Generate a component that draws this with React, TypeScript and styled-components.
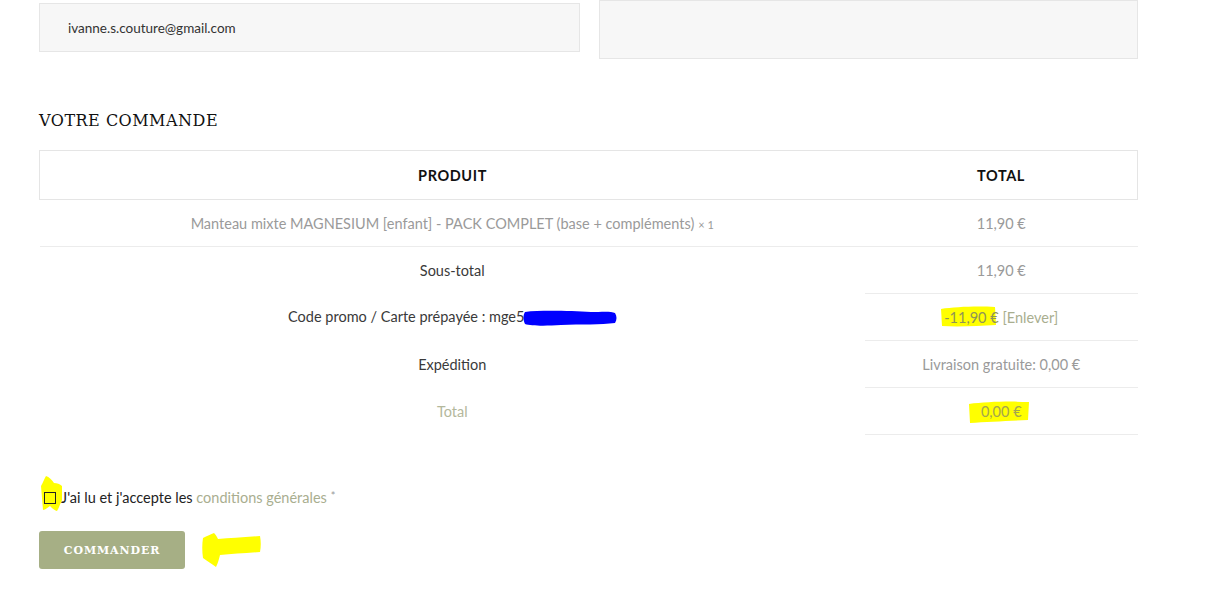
import React from "react";
import styled, { createGlobalStyle } from "styled-components";

const Global = createGlobalStyle`
  html, body { margin: 0; padding: 0; background: #fff; }
  body { font-family: "Lato", "Open Sans", sans-serif; color: #333; }
`;

const Page = styled.div`
  position: relative;
  width: 1209px;
  height: 594px;
  overflow: hidden;
  padding-left: 39px;
  box-sizing: border-box;
`;

const Wrap = styled.div`
  width: 1099px;
`;

const FieldRow = styled.div`
  display: flex;
  gap: 19px;
  align-items: flex-start;
`;

const Field = styled.div<{ $w: number; $h: number; $top: number }>`
  width: ${(p) => p.$w}px;
  height: ${(p) => p.$h}px;
  margin-top: ${(p) => p.$top}px;
  box-sizing: border-box;
  background: #f7f7f7;
  border: 1px solid #e6e6e6;
  display: flex;
  align-items: center;
  padding-left: 28px;
  font-size: 13.5px;
  color: #333;
`;

const Heading = styled.h3`
  margin: 52px 0 0;
  font-family: "DejaVu Serif", "Liberation Serif", serif;
  font-weight: 400;
  font-size: 16px;
  letter-spacing: 0.5px;
  color: #111;
  line-height: 20px;
`;

const Table = styled.table`
  margin-top: 19px;
  width: 1099px;
  border-collapse: collapse;
  table-layout: fixed;
  font-size: 14.5px;
`;

const HeadCell = styled.th<{ $w?: number }>`
  height: 48px;
  padding: 0;
  border-top: 1px solid #e5e5e5;
  border-bottom: 1px solid #e5e5e5;
  &:first-child { border-left: 1px solid #e5e5e5; }
  &:last-child { border-right: 1px solid #e5e5e5; }
  ${(p) => (p.$w ? `width: ${p.$w}px;` : "")}
  font-weight: 700;
  font-size: 14.5px;
  letter-spacing: 0.6px;
  color: #111;
  text-align: center;
`;

const BodyCell = styled.td<{ $muted?: boolean }>`
  height: 46px;
  padding: 0;
  text-align: center;
  color: ${(p) => (p.$muted ? "#9a9a9a" : "#333")};
  border-bottom: 1px solid #ececec;
`;

const Qty = styled.span`
  font-size: 11px;
  margin-left: 4px;
`;

const FootLabel = styled.th<{ $tone?: "olive" }>`
  height: 46px;
  padding: 0;
  font-weight: 400;
  text-align: center;
  color: ${(p) => (p.$tone === "olive" ? "#b4b89c" : "#3a3a3a")};
`;

const FootValue = styled.td<{ $tone?: "olive"; $noTop?: boolean }>`
  height: 46px;
  padding: 0;
  text-align: center;
  color: ${(p) => (p.$tone === "olive" ? "#a7ad84" : "#9a9a9a")};
  border-top: ${(p) => (p.$noTop ? "none" : "1px solid #ececec")};
  border-bottom: 1px solid #ececec;
`;

const Mark = styled.span`
  position: relative;
  display: inline-block;
`;

const Redacted = styled.span`
  position: relative;
  display: inline-block;
  width: 92px;
  height: 14px;
  vertical-align: middle;
`;

const Highlight = styled.svg`
  position: absolute;
  pointer-events: none;
  z-index: 0;
`;

const OnTop = styled.span<{ $color: string }>`
  position: relative;
  z-index: 1;
  color: ${(p) => p.$color};
`;

const Olive = styled.span`
  color: #a9ae8f;
`;

const Terms = styled.label`
  margin-top: 54px;
  display: flex;
  align-items: center;
  gap: 5px;
  padding-left: 5px;
  font-size: 14.5px;
  color: #222;
  position: relative;
`;

const Box = styled.span`
  position: relative;
  z-index: 1;
  width: 10px;
  height: 10px;
  border: 1.5px solid #222;
  background: transparent;
  display: inline-block;
`;

const Star = styled.span`
  color: #999;
  font-size: 11px;
  vertical-align: top;
  margin-left: 4px;
`;

const Actions = styled.div`
  margin-top: 25px;
  display: flex;
  align-items: center;
  position: relative;
`;

const Button = styled.button`
  width: 146px;
  height: 38px;
  border: none;
  border-radius: 3px;
  background: #a6af85;
  color: #fff;
  font-family: "DejaVu Serif", "Liberation Serif", serif;
  font-weight: 700;
  font-size: 11px;
  letter-spacing: 0.9px;
  cursor: pointer;
`;

const Overlay = styled.svg`
  position: absolute;
  pointer-events: none;
`;

export default function App() {
  return (
    <>
      <Global />
      <Page>
        <Wrap>
          <FieldRow>
            <Field $w={541} $h={49} $top={3}>ivanne.s.couture@gmail.com</Field>
            <Field $w={539} $h={59} $top={0} />
          </FieldRow>

          <Heading>VOTRE COMMANDE</Heading>

          <Table>
            <thead>
              <tr>
                <HeadCell $w={825}>PRODUIT</HeadCell>
                <HeadCell>TOTAL</HeadCell>
              </tr>
            </thead>
            <tbody>
              <tr>
                <BodyCell $muted>
                  Manteau mixte MAGNESIUM [enfant] - PACK COMPLET (base + compléments)
                  <Qty>× 1</Qty>
                </BodyCell>
                <BodyCell $muted>11,90 €</BodyCell>
              </tr>
            </tbody>
            <tfoot>
              <tr>
                <FootLabel>Sous-total</FootLabel>
                <FootValue $noTop>11,90 €</FootValue>
              </tr>
              <tr>
                <FootLabel>
                  Code promo / Carte prépayée : mge5
                  <Redacted>
                    <Overlay width="98" height="20" viewBox="0 0 98 20" style={{ left: "-3px", top: "-4px" }}>
                      <path
                        d="M4 4 C20 2 50 3 70 4 C80 4 90 3 94 5 C96 8 96 12 94 15 C80 17 60 16 40 17 C25 18 10 18 4 16 C2 12 2 7 4 4 Z"
                        fill="#0000ff"
                      />
                    </Overlay>
                  </Redacted>
                </FootLabel>
                <FootValue>
                  <Mark>
                    <Highlight width="58" height="22" viewBox="0 0 58 22" style={{ left: "-4px", top: "-3px" }}>
                      <path d="M1 3 C15 1 35 0 55 1 L56 19 C38 20 18 21 2 20 Z" fill="#ffff00" />
                    </Highlight>
                    <OnTop $color="#8f9458">-11,90 €</OnTop>
                  </Mark>{" "}
                  <Olive>[Enlever]</Olive>
                </FootValue>
              </tr>
              <tr>
                <FootLabel>Expédition</FootLabel>
                <FootValue>Livraison gratuite: 0,00 €</FootValue>
              </tr>
              <tr>
                <FootLabel $tone="olive">Total</FootLabel>
                <FootValue $tone="olive">
                  <Mark>
                    <Highlight width="64" height="24" viewBox="0 0 64 24" style={{ left: "-14px", top: "-3px" }}>
                      <path d="M2 4 C18 2 40 1 62 2 L61 20 C42 21 20 22 3 23 Z" fill="#ffff00" />
                    </Highlight>
                    <OnTop $color="#a3a550">0,00 €</OnTop>
                  </Mark>
                </FootValue>
              </tr>
            </tfoot>
          </Table>

          <Terms>
            <Overlay width="24" height="38" viewBox="0 0 24 38" style={{ left: "1px", top: "-15px" }}>
              <path
                d="M6 2 C9 3 12 6 14 9 C17 9 20 10 22 12 L22 26 C20 30 19 34 17 37 C14 36 12 34 10 32 C7 34 5 36 3 36 L1 12 C3 9 4 5 6 2 Z"
                fill="#ffff00"
              />
            </Overlay>
            <Box />
            <span>
              J'ai lu et j'accepte les <Olive>conditions générales</Olive>
              <Star>*</Star>
            </span>
          </Terms>

          <Actions>
            <Button>COMMANDER</Button>
            <Overlay width="62" height="38" viewBox="0 0 62 38" style={{ left: "163px", top: "0px" }}>
              <path
                d="M12 2 C14 4 15 6 16 8 C28 7 42 6 58 5 C59 10 59 16 58 21 C44 22 30 23 18 24 C17 28 16 32 14 36 C10 33 5 30 1 27 C0 20 0 13 1 7 C5 5 9 3 12 2 Z"
                fill="#ffff00"
              />
            </Overlay>
          </Actions>
        </Wrap>
      </Page>
    </>
  );
}
